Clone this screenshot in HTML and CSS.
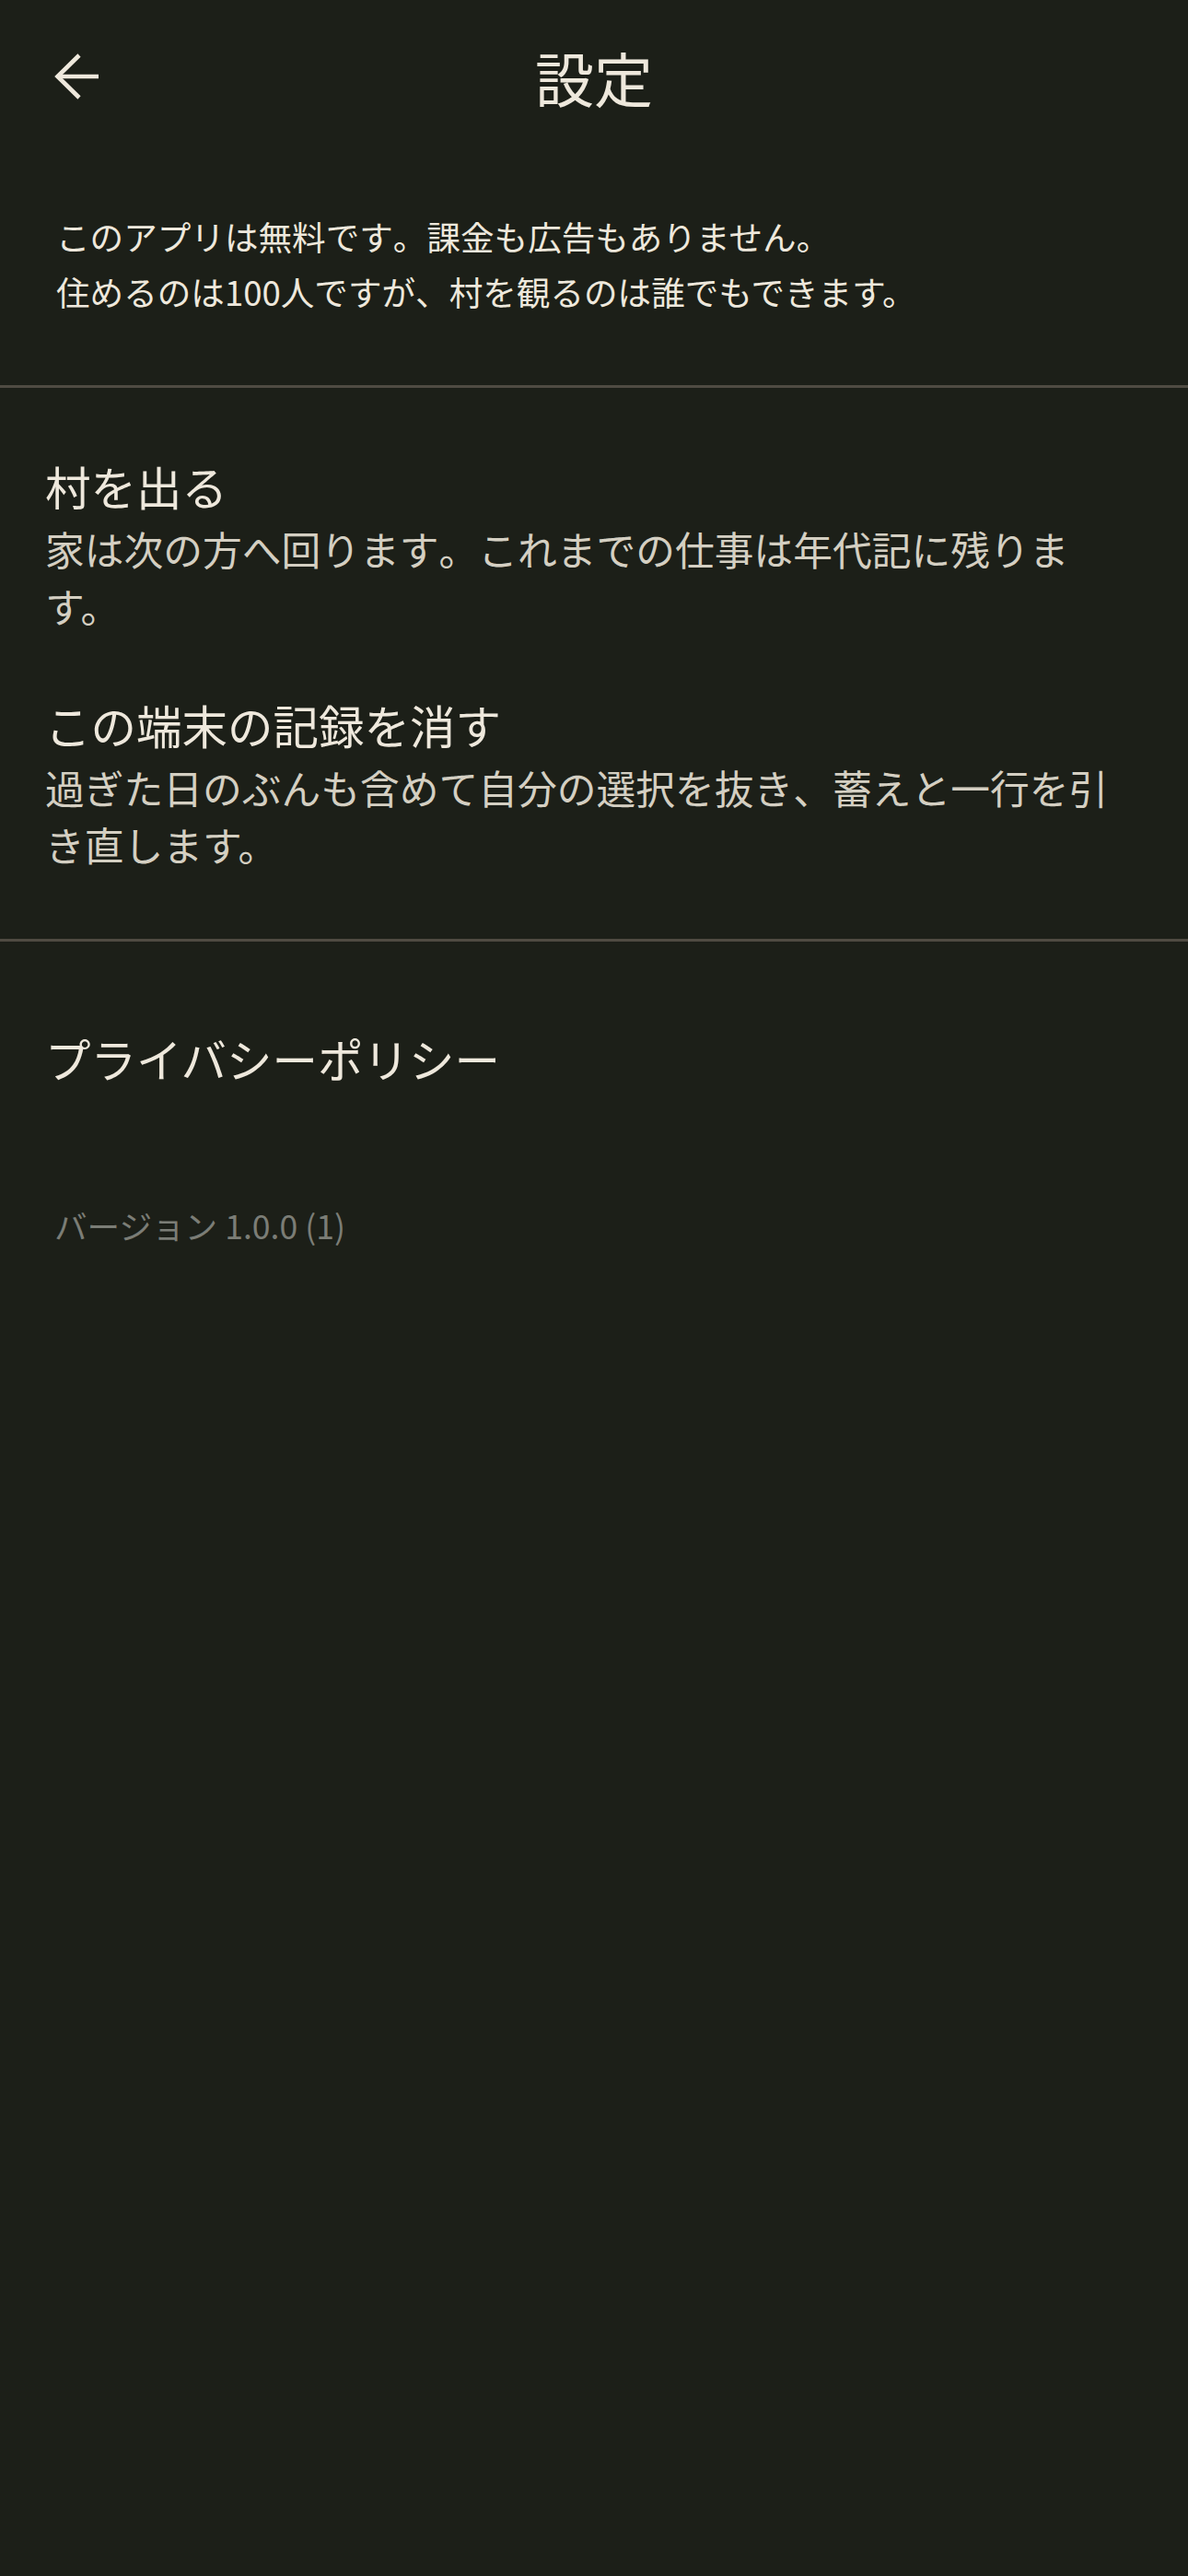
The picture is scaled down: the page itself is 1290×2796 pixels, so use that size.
FILE: index.html
```html
<!DOCTYPE html>
<html lang="ja">
<head>
<meta charset="utf-8">
<title>設定</title>
<link rel="stylesheet" href="styles.css">
</head>
<body>
<div class="screen">
  <header class="appbar">
    <div class="appbar-left">
      <button class="back" aria-label="戻る">
        <svg class="back-icon" viewBox="0 0 52 52" width="52" height="52" aria-hidden="true">
          <path d="M50 25H5" />
          <path d="M29 2L5.5 25L29 48" />
        </svg>
      </button>
    </div>
    <h1 class="title">設定</h1>
    <div class="appbar-right"></div>
  </header>

  <section class="intro">
    <p>このアプリは無料です<span class="pu">。</span>課金も広告もありません。</p>
    <p>住めるのは100人ですが<span class="pu">、</span>村を観るのは誰でもできます。</p>
  </section>

  <hr class="divider">

  <section class="actions">
    <div class="item">
      <div class="item-title">村を出る</div>
      <div class="item-desc">家は次の方へ回ります<span class="pu">。</span>これまでの仕事は年代記に残りま<span class="nb">す。</span></div>
    </div>
    <div class="item">
      <div class="item-title">この端末の記録を消す</div>
      <div class="item-desc">過ぎた日のぶんも含めて自分の選択を抜き<span class="pu">、</span>蓄えと一行を引き直しま<span class="nb">す。</span></div>
    </div>
  </section>

  <hr class="divider">

  <section class="links">
    <div class="item-title">プライバシーポリシー</div>
  </section>

  <p class="version">バージョン 1.0.0 (1)</p>
</div>
</body>
</html>
```

FILE: styles.css
```css
html, body {
  margin: 0;
  padding: 0;
  background: #1c1f18;
}

body {
  font-family: "Noto Sans CJK JP", "Noto Sans", sans-serif;
  color: #eee8dc;
  min-height: 2796px;
  text-spacing-trim: space-all;
  font-feature-settings: "chws" 0, "halt" 0, "palt" 0;
}

.pu {
  display: inline-block;
  width: 1em;
  text-align: left;
}

.nb {
  white-space: nowrap;
}

.screen {
  display: flex;
  flex-direction: column;
}

.appbar {
  height: 168px;
  display: grid;
  grid-template-columns: 1fr auto 1fr;
  align-items: center;
}

.appbar-left {
  padding-left: 57px;
  display: flex;
  align-items: center;
}

.back {
  background: none;
  border: 0;
  padding: 0;
  margin: 0;
  width: 52px;
  height: 52px;
  display: flex;
  align-items: center;
  justify-content: center;
  cursor: pointer;
}

.back-icon {
  display: block;
  fill: none;
  stroke: #eee8dc;
  stroke-width: 4.6;
  stroke-linecap: butt;
  stroke-linejoin: miter;
}

.title {
  margin: 0;
  font-size: 64px;
  font-weight: 400;
  line-height: 1;
  color: #eee8dc;
  padding-bottom: 2px;
}

.intro {
  padding: 59px 61px 71px;
}

.intro p {
  margin: 0;
  font-size: 36.6px;
  line-height: 60px;
  color: #eee8dc;
}

.divider {
  margin: 0;
  border: 0;
  height: 3px;
  background: #4f4b42;
}

.actions {
  padding: 71px 49px 72px;
  display: flex;
  flex-direction: column;
  gap: 63px;
}

.item {
  display: flex;
  flex-direction: column;
}

.item-title {
  font-size: 49.5px;
  line-height: 72px;
  color: #eee8dc;
}

.item-desc {
  font-size: 42.75px;
  line-height: 62px;
  color: #d4cfc2;
}

.links {
  padding: 91px 49px 0;
}

.version {
  margin: 120px 0 0;
  padding: 0 59px;
  font-size: 35.6px;
  line-height: 50px;
  color: #7b7d76;
}
```
